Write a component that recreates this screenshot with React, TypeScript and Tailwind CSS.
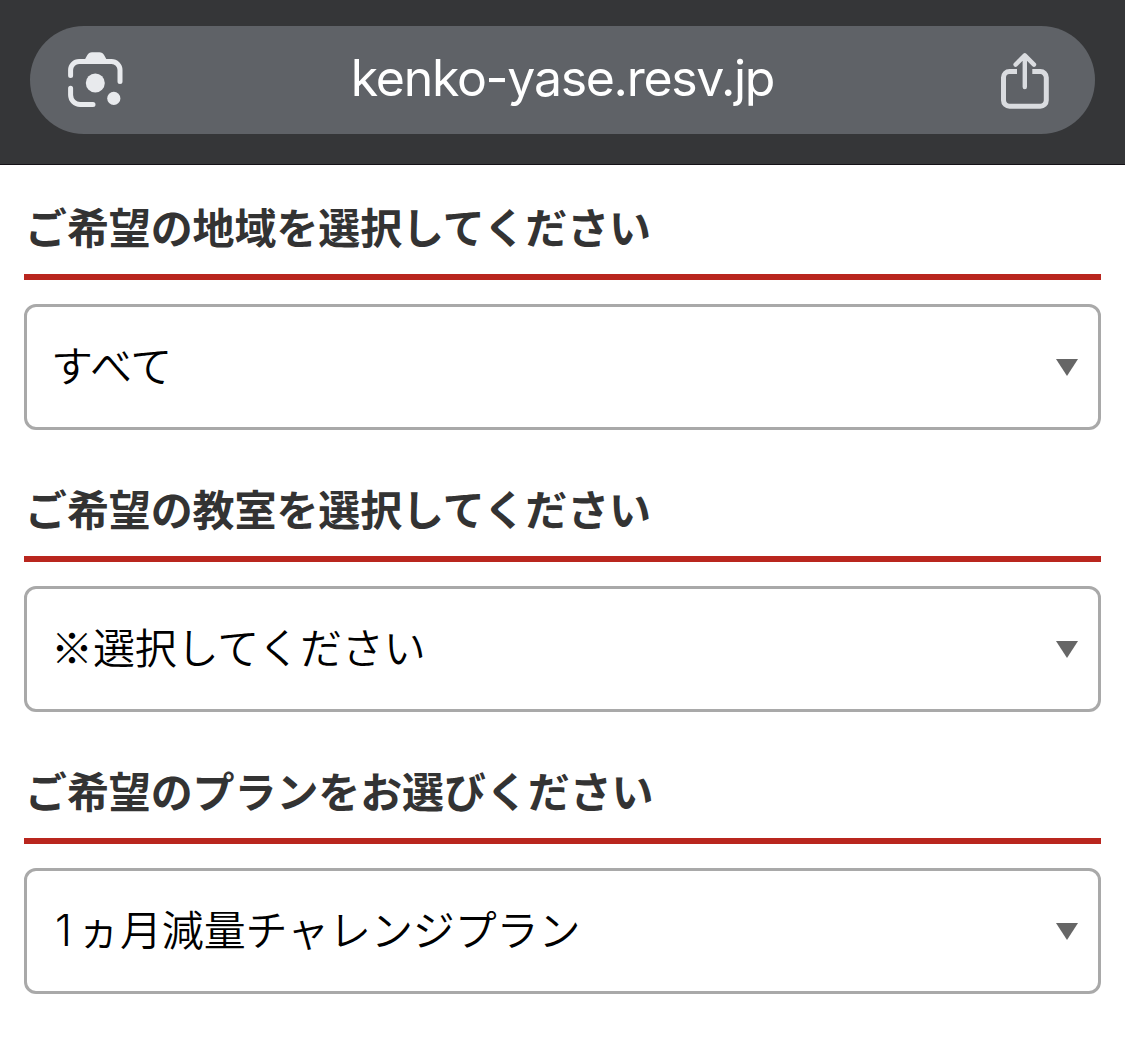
type Field = {
  label: string
  count?: string
  value: string
}

const fields: Field[] = [
  { label: 'ご希望の地域を選択してください', value: 'すべて' },
  { label: 'ご希望の教室を選択してください', value: '※選択してください' },
  { label: 'ご希望のプランをお選びください', count: '1', value: 'ヵ月減量チャレンジプラン' },
]

function LensIcon() {
  return (
    <svg width="56" height="56" viewBox="0 0 56 56" fill="none" className="shrink-0">
      <g stroke="#e8eaed" strokeWidth="5" strokeLinecap="round">
        <path d="M2.6 23.4V18.1A8.5 8.5 0 0 1 11.1 9.6H43.5A8.5 8.5 0 0 1 52 18.1V29.4" />
        <path d="M2.6 36.2V43A9.5 9.5 0 0 0 12.1 52.4H25" />
      </g>
      <path d="M15.2 10.5L19.2 3.2Q20.8 .2 24 .2H31.4Q34.6 .2 36.2 3.2L40.2 10.5Z" fill="#e8eaed" />
      <circle cx="27.3" cy="31" r="9.5" fill="#e8eaed" />
      <circle cx="45.8" cy="46.4" r="6.6" fill="#e8eaed" />
    </svg>
  )
}

function ShareIcon() {
  return (
    <svg width="48" height="58" viewBox="0 0 48 58" fill="none" className="shrink-0">
      <path
        d="M16 20.6H8.5A6 6 0 0 0 2.5 26.6V49.2A6 6 0 0 0 8.5 55.2H39.3A6 6 0 0 0 45.3 49.2V26.6A6 6 0 0 0 39.3 20.6H31.3"
        stroke="#dadce0"
        strokeWidth="5"
      />
      <path
        d="M23.8 36V5M14.6 13.6L23.8 4.4L33 13.6"
        stroke="#dadce0"
        strokeWidth="4.4"
        strokeLinecap="round"
        strokeLinejoin="round"
      />
    </svg>
  )
}

function AddressBar() {
  return (
    <header className="h-[165px] border-b border-[#151217] bg-[#353638] px-[30px] pt-[26px]">
      <div className="flex h-[108px] items-center justify-between rounded-full bg-[#5f6267] pr-[46px] pl-[38px]">
        <LensIcon />
        <span className="pb-[5px] font-['Inter',sans-serif] text-[50px] leading-none tracking-[-1.3px] text-white">
          kenko-yase.resv.jp
        </span>
        <ShareIcon />
      </div>
    </header>
  )
}

function SelectField({ label, count, value }: Field) {
  return (
    <section className="mb-[33px]">
      <h2 className="mb-6 h-[99px] border-b-6 border-[#b9261e] pt-[14px] pl-px text-[42px] leading-[62px] font-bold tracking-[-0.1px] text-[#333]">
        {label}
      </h2>
      <button
        type="button"
        className="flex h-[126px] w-full items-center justify-between rounded-xl border-3 border-[#a9a9a9] bg-white pr-5 pl-6 text-[42px] leading-[60px] font-[350] tracking-[-0.1px] text-black"
      >
        <span className="pb-[7px]">
          {count && (
            <span className="inline-block w-[27px] pl-1 text-left font-['Inter',sans-serif] text-[43px] leading-none">
              {count}
            </span>
          )}
          {value}
        </span>
        <svg width="22" height="17" viewBox="0 0 22 17">
          <path d="M0 0H22L11 17Z" fill="#666" />
        </svg>
      </button>
    </section>
  )
}

export default function App() {
  return (
    <div className="h-[1041px] overflow-hidden bg-white font-['Noto_Sans_CJK_JP',sans-serif]">
      <AddressBar />
      <main className="px-6 pt-4">
        {fields.map((field) => (
          <SelectField key={field.label} {...field} />
        ))}
      </main>
    </div>
  )
}
